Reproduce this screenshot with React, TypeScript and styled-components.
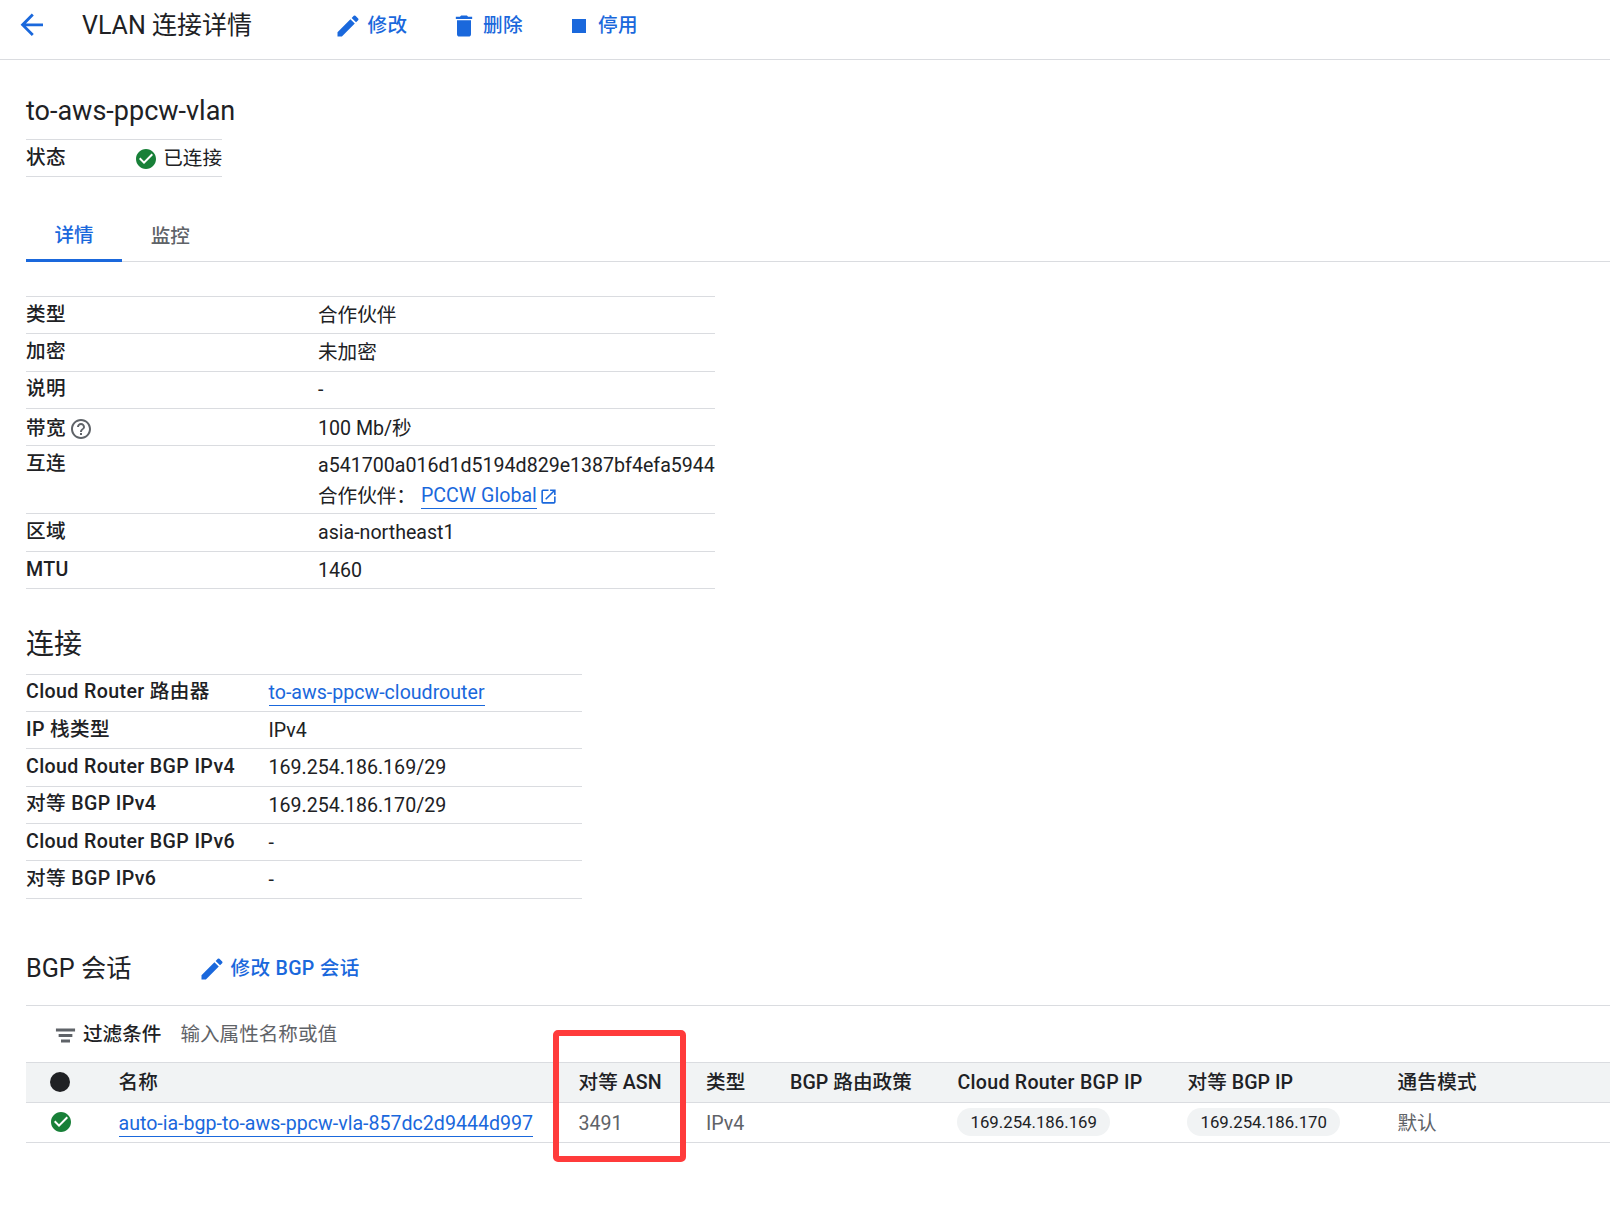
import React from "react";
import styled, { createGlobalStyle } from "styled-components";

const Global = createGlobalStyle`
  html, body { margin: 0; padding: 0; background: #fff; }
  body { font-family: Roboto, "Noto Sans CJK SC", sans-serif; color: #202124; font-size: 19.6px; line-height: 28px; }
  * { box-sizing: border-box; }
`;

const BLUE = "#1a68dc";
const LINE = "#dadce0";

const Page = styled.div`
  position: relative;
  width: 1610px;
  height: 1230px;
  overflow: hidden;
  background: #fff;
`;
const TopBar = styled.header`
  display: flex;
  align-items: center;
  height: 60px;
  border-bottom: 1.5px solid ${LINE};
  padding: 0 0 7px 15px;
`;
const BackButton = styled.span`
  display: flex;
  color: ${BLUE};
  margin: 0 33.4px 3px 0;
`;
const PageTitle = styled.h1`
  margin: 0;
  width: 252.5px;
  font-size: 25px;
  font-weight: 400;
`;
const Action = styled.span<{ $w: number }>`
  display: flex;
  align-items: center;
  gap: 5px;
  width: ${(p) => p.$w}px;
  color: ${BLUE};
  font-weight: 500;
  letter-spacing: 0.3px;
  white-space: nowrap;
`;
const Content = styled.main`
  padding-left: 26px;
`;
const ResourceName = styled.h2`
  margin: 34px 0 0;
  height: 45px;
  font-size: 27px;
  font-weight: 400;
  line-height: 34px;
`;
const StatusBox = styled.div`
  display: flex;
  align-items: center;
  width: 196px;
  height: 38px;
  padding-top: 1.5px;
  border-top: 1.5px solid ${LINE};
  border-bottom: 1.5px solid ${LINE};
`;
const StatusLabel = styled.span`
  width: 108.5px;
  font-weight: 475;
  letter-spacing: 0.34px;
  position: relative;
  top: -1px;
`;
const StatusValue = styled.span`
  display: flex;
  align-items: center;
  gap: 5.5px;
  white-space: nowrap;
`;
const Tabs = styled.nav`
  display: flex;
  margin-top: 28px;
  height: 57px;
  border-bottom: 1.5px solid ${LINE};
`;
const Tab = styled.span<{ $active?: boolean }>`
  display: flex;
  align-items: center;
  padding: ${(p) => (p.$active ? 7 : 6)}px 28.5px 0;
  height: 57px;
  color: ${(p) => (p.$active ? BLUE : "#5f6368")};
  font-weight: 500;
  border-bottom: ${(p) => (p.$active ? `3px solid ${BLUE}` : "none")};
`;
const KvTable = styled.section<{ $w: number; $key: number; $top: number }>`
  width: ${(p) => p.$w}px;
  margin-top: ${(p) => p.$top}px;
  border-top: 1.5px solid ${LINE};
  display: grid;
  grid-template-columns: ${(p) => p.$key}px 1fr;
`;
const KvKey = styled.div<{ $h?: number; $nudge?: number }>`
  display: flex;
  align-items: ${(p) => (p.$h ? "flex-start" : "center")};
  gap: 3px;
  height: ${(p) => p.$h ?? 37.35}px;
  border-bottom: 1.5px solid ${LINE};
  font-weight: 475;
  letter-spacing: 0.38px;
  padding-top: ${(p) => (p.$h ? 4 : p.$nudge ?? 0)}px;
  padding-bottom: ${(p) => (p.$h ? 0 : 2)}px;
  white-space: nowrap;
`;
const KvValue = styled.div<{ $h?: number; $nudge?: number }>`
  display: ${(p) => (p.$h ? "block" : "flex")};
  align-items: center;
  height: ${(p) => p.$h ?? 37.35}px;
  border-bottom: 1.5px solid ${LINE};
  padding-top: ${(p) => (p.$h ? 4 : p.$nudge ?? 0)}px;
  white-space: nowrap;
  line-height: ${(p) => (p.$h ? "31px" : "28px")};
`;
const TextLink = styled.a`
  color: ${BLUE};
  text-decoration: none;
  border-bottom: 1px solid ${BLUE};
  line-height: 24px;
`;
const Partner = styled.div`
  display: flex;
  align-items: center;
`;
const PartnerLabel = styled.span`
  width: 103px;
`;
const OpenGlyph = styled.span`
  display: flex;
  margin-left: 2.6px;
`;
const SectionTitle = styled.h3<{ $top: number }>`
  margin: ${(p) => p.$top}px 0 0;
  font-size: 28px;
  line-height: 40px;
  font-weight: 400;
`;
const BgpHead = styled.div`
  display: flex;
  align-items: center;
  margin-top: 50.5px;
  height: 40px;
`;
const BgpTitle = styled.h3`
  margin: 0;
  width: 171.5px;
  font-size: 25.2px;
  font-weight: 400;
`;
const Divider = styled.div`
  border-top: 1.5px solid ${LINE};
  margin-top: 16px;
`;
const FilterBar = styled.div`
  display: flex;
  align-items: center;
  height: 56px;
  padding: 2px 0 0 26px;
`;
const FilterLabel = styled.span`
  color: #202124;
  font-weight: 500;
  margin-left: 4px;
  margin-right: 19px;
`;
const FilterHint = styled.span`
  color: #5f6368;
`;
const Grid = styled.div`
  display: grid;
  grid-template-columns: 92.5px 460px 127.5px 84px 167.5px 230px 210px 1fr;
`;
const HeadCell = styled.div<{ $ls?: number }>`
  display: flex;
  align-items: center;
  height: 40.5px;
  padding-top: 2px;
  background: #f1f3f4;
  border-top: 1.5px solid ${LINE};
  border-bottom: 1.5px solid ${LINE};
  font-weight: 500;
  letter-spacing: ${(p) => p.$ls ?? 0.05}px;
  white-space: nowrap;
`;
const BodyCell = styled.div`
  display: flex;
  align-items: center;
  height: 40.5px;
  padding-top: 4px;
  color: #5f6368;
  border-bottom: 1.5px solid ${LINE};
  white-space: nowrap;
`;
const DotCell = styled.span`
  display: flex;
  margin: 0 0 2px 24px;
`;
const CheckCell = styled.span`
  display: flex;
  margin: 0 0 4px 22.5px;
`;
const Chip = styled.span`
  display: inline-flex;
  align-items: center;
  height: 28px;
  padding: 0 13.5px;
  margin: 0 0 4px -0.5px;
  border-radius: 14px;
  background: #f1f3f4;
  color: #202124;
  font-size: 16.8px;
`;
const Dot = styled.span`
  display: block;
  width: 20px;
  height: 20px;
  border-radius: 50%;
  background: #202124;
`;
const Highlight = styled.div`
  position: absolute;
  left: 553px;
  top: 1030px;
  width: 133px;
  height: 132px;
  border: 6px solid #ff3b3b;
  border-radius: 5px;
`;

const Icon = ({ d, size = 28, color = "currentColor" }: { d: string; size?: number; color?: string }) => (
  <svg width={size} height={size} viewBox="0 0 24 24" fill={color} style={{ flex: "none" }}>
    <path d={d} />
  </svg>
);

const P = {
  back: "M20 11H7.83l5.59-5.59L12 4l-8 8 8 8 1.41-1.41L7.83 13H20v-2z",
  edit: "M3 17.25V21h3.75L17.81 9.94l-3.75-3.75L3 17.25zM20.71 7.04a1 1 0 000-1.41l-2.34-2.34a1 1 0 00-1.41 0l-1.83 1.83 3.75 3.75 1.83-1.83z",
  del: "M6 19c0 1.1.9 2 2 2h8c1.1 0 2-.9 2-2V7H6v12zM19 4h-3.5l-1-1h-5l-1 1H5v2h14V4z",
  stop: "M6 6h12v12H6z",
  ok: "M12 2C6.48 2 2 6.48 2 12s4.48 10 10 10 10-4.48 10-10S17.52 2 12 2zm-2 15l-5-5 1.41-1.41L10 14.17l7.59-7.59L19 8l-9 9z",
  help: "M11 18h2v-2h-2v2zm1-16C6.48 2 2 6.48 2 12s4.48 10 10 10 10-4.48 10-10S17.52 2 12 2zm0 18c-4.41 0-8-3.59-8-8s3.59-8 8-8 8 3.59 8 8-3.59 8-8 8zm0-14c-2.21 0-4 1.79-4 4h2c0-1.1.9-2 2-2s2 .9 2 2c0 2-3 1.75-3 5h2c0-2.25 3-2.5 3-5 0-2.21-1.79-4-4-4z",
  open: "M19 19H5V5h7V3H5a2 2 0 00-2 2v14a2 2 0 002 2h14c1.1 0 2-.9 2-2v-7h-2v7zM14 3v2h3.59l-9.83 9.83 1.41 1.41L19 6.41V10h2V3h-7z",
  filter: "M3.5 5.75h17v2.7h-17zM5.9 10.65h12.2v2.7H5.9zM8 15.55h8v2.7H8z",
};

const connection: [React.ReactNode, React.ReactNode][] = [
  ["Cloud Router 路由器", <TextLink>to-aws-ppcw-cloudrouter</TextLink>],
  ["IP 栈类型", "IPv4"],
  ["Cloud Router BGP IPv4", "169.254.186.169/29"],
  ["对等 BGP IPv4", "169.254.186.170/29"],
  ["Cloud Router BGP IPv6", "-"],
  ["对等 BGP IPv6", "-"],
];

export default function App() {
  return (
    <Page>
      <Global />
      <TopBar>
        <BackButton><Icon d={P.back} size={33.6} /></BackButton>
        <PageTitle>VLAN 连接详情</PageTitle>
        <Action $w={115.5}><Icon d={P.edit} />修改</Action>
        <Action $w={115}><Icon d={P.del} />删除</Action>
        <Action $w={100}><Icon d={P.stop} />停用</Action>
      </TopBar>
      <Content>
        <ResourceName>to-aws-ppcw-vlan</ResourceName>
        <StatusBox>
          <StatusLabel>状态</StatusLabel>
          <StatusValue><Icon d={P.ok} size={24} color="#188038" />已连接</StatusValue>
        </StatusBox>
        <Tabs>
          <Tab $active>详情</Tab>
          <Tab>监控</Tab>
        </Tabs>
        <KvTable $w={689} $key={292} $top={34}>
          <KvKey $nudge={2}>类型</KvKey><KvValue $nudge={2}>合作伙伴</KvValue>
          <KvKey $nudge={1}>加密</KvKey><KvValue $nudge={1}>未加密</KvValue>
          <KvKey>说明</KvKey><KvValue>-</KvValue>
          <KvKey $nudge={5}>带宽<Icon d={P.help} size={24} color="#5f6368" /></KvKey><KvValue $nudge={4}>100 Mb/秒</KvValue>
          <KvKey $h={68}>互连</KvKey>
          <KvValue $h={68}>
            a541700a016d1d5194d829e1387bf4efa5944
            <Partner>
              <PartnerLabel>合作伙伴：</PartnerLabel>
              <TextLink>PCCW Global</TextLink>
              <OpenGlyph><Icon d={P.open} size={19} color={BLUE} /></OpenGlyph>
            </Partner>
          </KvValue>
          <KvKey>区域</KvKey><KvValue>asia-northeast1</KvValue>
          <KvKey $nudge={2}>MTU</KvKey><KvValue $nudge={3}>1460</KvValue>
        </KvTable>
        <SectionTitle $top={36}>连接</SectionTitle>
        <KvTable $w={556} $key={242.5} $top={8.5}>
          {connection.map(([k, v], i) => (
            <React.Fragment key={i}>
              <KvKey $nudge={1}>{k}</KvKey>
              <KvValue $nudge={2}>{v}</KvValue>
            </React.Fragment>
          ))}
        </KvTable>
        <BgpHead>
          <BgpTitle>BGP 会话</BgpTitle>
          <Action $w={300}><Icon d={P.edit} />修改 BGP 会话</Action>
        </BgpHead>
        <Divider />
        <FilterBar>
          <Icon d={P.filter} size={27} color="#5f6368" />
          <FilterLabel>过滤条件</FilterLabel>
          <FilterHint>输入属性名称或值</FilterHint>
        </FilterBar>
        <Grid>
          <HeadCell><DotCell><Dot /></DotCell></HeadCell>
          <HeadCell>名称</HeadCell>
          <HeadCell>对等 ASN</HeadCell>
          <HeadCell>类型</HeadCell>
          <HeadCell>BGP 路由政策</HeadCell>
          <HeadCell $ls={0.27}>Cloud Router BGP IP</HeadCell>
          <HeadCell>对等 BGP IP</HeadCell>
          <HeadCell $ls={0.25}>通告模式</HeadCell>
          <BodyCell><CheckCell><Icon d={P.ok} size={24} color="#188038" /></CheckCell></BodyCell>
          <BodyCell><TextLink>auto-ia-bgp-to-aws-ppcw-vla-857dc2d9444d997</TextLink></BodyCell>
          <BodyCell>3491</BodyCell>
          <BodyCell>IPv4</BodyCell>
          <BodyCell />
          <BodyCell><Chip>169.254.186.169</Chip></BodyCell>
          <BodyCell><Chip>169.254.186.170</Chip></BodyCell>
          <BodyCell>默认</BodyCell>
        </Grid>
      </Content>
      <Highlight />
    </Page>
  );
}
